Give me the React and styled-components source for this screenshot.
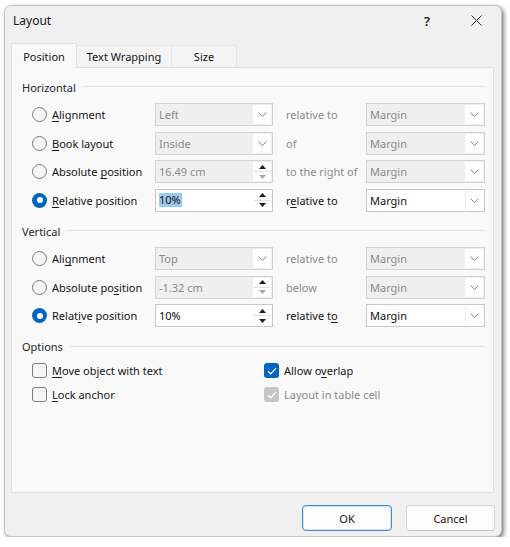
import React from 'react';
import styled, { createGlobalStyle, css } from 'styled-components';

const GlobalStyle = createGlobalStyle`
  html, body { margin: 0; padding: 0; background: #ffffff; }
  body {
    font-family: "Noto Sans", "Segoe UI", sans-serif;
    font-size: 11px;
    color: #141414;
  }
  * { box-sizing: border-box; }
`;

const Stage = styled.div`
  padding: 5px 0 0 4px;
`;

const Window = styled.div`
  width: 498px;
  height: 532px;
  background: #f0f0f0;
  border: 1px solid #c4c4c4;
  border-radius: 7px;
  box-shadow: 2px 2px 4px rgba(0, 0, 0, 0.5);
  display: flex;
  flex-direction: column;
  padding: 0 7px 5px 6px;
`;

const TitleBar = styled.div`
  height: 29px;
  display: flex;
  align-items: center;
  margin-right: -7px;
  padding-left: 2px;
`;

const Title = styled.div`
  flex: 1;
  font-size: 12px;
  color: #141414;
`;

const CaptionButton = styled.div`
  width: ${p => p.$w}px;
  height: 29px;
  display: flex;
  align-items: center;
  justify-content: center;
  color: #222;
  font-size: 13px;
  font-weight: 600;
`;

const TabStrip = styled.div`
  margin-top: 8px;
  height: 24px;
  display: flex;
  align-items: flex-end;
  position: relative;
  z-index: 1;
`;

const Tab = styled.div`
  width: ${p => p.$w}px;
  display: flex;
  align-items: center;
  justify-content: center;
  color: #141414;
  ${p => p.$active
    ? css`
        height: 25px;
        margin-bottom: -1px;
        background: #f9f9f9;
        border: 1px solid #e1e1e1;
        border-bottom: none;
      `
    : css`
        height: 22px;
        background: #f4f4f4;
        border: 1px solid #e6e6e6;
        border-left: none;
        border-bottom: none;
      `}
`;

const Panel = styled.div`
  height: 426px;
  background: #f9f9f9;
  border: 1px solid #e1e1e1;
  padding: 11px 8px 0 10px;
`;

const Group = styled.section`
  & + & { margin-top: ${p => p.$gap ?? 8}px; }
`;

const GroupHeader = styled.div`
  height: 16px;
  display: flex;
  align-items: center;
  color: #262626;
  &::after {
    content: '';
    flex: 1;
    height: 1px;
    margin: -1px 0 0 7px;
    background: #e4e4e4;
  }
`;

const Rows = styled.div`
  margin-top: ${p => p.$top}px;
`;

const FieldRow = styled.div`
  height: 28.5px;
  padding-left: 11px;
  display: grid;
  grid-template-columns: 122px 118px 93px 119px;
  align-items: center;
`;

const Choice = styled.label`
  display: flex;
  align-items: center;
  gap: 5px;
  white-space: nowrap;
`;

const Radio = styled.span`
  width: 15px;
  height: 15px;
  margin-left: -1px;
  border-radius: 50%;
  flex: none;
  display: flex;
  align-items: center;
  justify-content: center;
  ${p => p.$checked
    ? css`
        background: #0067c0;
        &::after {
          content: '';
          width: 6px;
          height: 6px;
          border-radius: 50%;
          background: #ffffff;
        }
      `
    : css`
        background: #f4f4f4;
        border: 1px solid #7c7c7c;
      `}
`;

const Key = styled.u`
  text-decoration-thickness: 1px;
  text-underline-offset: 2px;
`;

const Field = styled.div`
  height: 23px;
  display: flex;
  border: 1px solid ${p => (p.$disabled ? '#d2d2d2' : '#c8c8c8')};
  background: ${p => (p.$disabled ? '#efefef' : '#ffffff')};
  color: ${p => (p.$disabled ? '#8a8a8a' : '#111111')};
`;

const FieldValue = styled.span`
  flex: 1;
  display: flex;
  align-items: center;
  padding-left: 3px;
  white-space: nowrap;
`;

const Selection = styled.span`
  background: #9dc8ef;
  color: #111;
  line-height: 14px;
  padding-right: 1px;
`;

const DropButton = styled.span`
  width: 18px;
  margin: 1px;
  background: #ffffff;
  display: flex;
  align-items: center;
  justify-content: center;
  border-left: 1px solid ${p => (p.$disabled ? 'transparent' : '#ececec')};
`;

const SpinButtons = styled.span`
  width: 18px;
  margin: 1px;
  background: #ffffff;
  display: flex;
  flex-direction: column;
`;

const SpinHalf = styled.span`
  flex: 1;
  display: flex;
  align-items: center;
  justify-content: center;
  & + & { border-top: 1px solid #e2e2e2; }
`;

const Relation = styled.span`
  padding-left: 13px;
  white-space: nowrap;
  color: ${p => (p.$disabled ? '#8a8a8a' : '#141414')};
`;

const OptionRows = styled.div`
  margin-top: 4px;
  padding-left: 10px;
  display: grid;
  grid-template-columns: 232px 1fr;
  grid-auto-rows: 24px;
  align-items: center;
`;

const Check = styled.span`
  width: 15px;
  height: 15px;
  border-radius: 3px;
  flex: none;
  display: flex;
  align-items: center;
  justify-content: center;
  ${p => p.$checked
    ? css`background: ${p.$disabled ? '#c6c6c6' : '#0067c0'};`
    : css`
        background: #f6f6f6;
        border: 1px solid #7c7c7c;
      `}
`;

const CheckLabel = styled.label`
  display: flex;
  align-items: center;
  gap: 5px;
  white-space: nowrap;
  color: ${p => (p.$disabled ? '#8a8a8a' : '#141414')};
`;

const ButtonBar = styled.div`
  margin-top: 12px;
  margin-right: -1px;
  display: flex;
  justify-content: flex-end;
  gap: 14px;
`;

const Button = styled.button`
  width: ${p => p.$w}px;
  height: 26px;
  font: inherit;
  color: #141414;
  background: #fdfdfd;
  border-radius: 4px;
  ${p => p.$default
    ? css`
        border: 1px solid #3f8bd6;
        box-shadow: inset 0 0 0 1px #d3e6f8;
      `
    : css`
        border: 1px solid #d6d6d6;
        border-bottom-color: #c4c4c4;
      `}
`;

const Chevron = () => (
  <svg width="9" height="5" viewBox="0 0 9 5">
    <polyline points="0.5,0.5 4.5,4.5 8.5,0.5" fill="none" stroke="#8a8a8a" strokeWidth="1" />
  </svg>
);

const Arrow = ({ down, color }) => (
  <svg width="7" height="4" viewBox="0 0 7 4">
    <polygon points={down ? '0,0 7,0 3.5,4' : '0,4 7,4 3.5,0'} fill={color} />
  </svg>
);

const Tick = () => (
  <svg width="10" height="8" viewBox="0 0 10 8">
    <polyline points="1,4.2 3.7,6.8 9,1.2" fill="none" stroke="#ffffff" strokeWidth="1.2" />
  </svg>
);

const CloseGlyph = () => (
  <svg width="11" height="11" viewBox="0 0 11 11">
    <path d="M0.5 0.5 L10.5 10.5 M10.5 0.5 L0.5 10.5" stroke="#2b2b2b" strokeWidth="1" />
  </svg>
);

// Label text with its access key underlined
const Mnemonic = ({ text, at }) => {
  if (at == null) return text;
  return (
    <>
      {text.slice(0, at)}
      <Key>{text[at]}</Key>
      {text.slice(at + 1)}
    </>
  );
};

const ValueBox = ({ kind, value, disabled, highlighted, downDisabled }) => (
  <Field $disabled={disabled}>
    <FieldValue>{highlighted ? <Selection>{value}</Selection> : value}</FieldValue>
    {kind === 'select' ? (
      <DropButton $disabled={disabled}>
        <Chevron />
      </DropButton>
    ) : (
      <SpinButtons>
        <SpinHalf><Arrow color="#1b1b1b" /></SpinHalf>
        <SpinHalf><Arrow down color={downDisabled ? '#a8a8a8' : '#1b1b1b'} /></SpinHalf>
      </SpinButtons>
    )}
  </Field>
);

const PositionRow = ({ row }) => {
  const disabled = !row.checked;
  return (
    <FieldRow>
      <Choice>
        <Radio $checked={row.checked} />
        <span><Mnemonic text={row.label} at={row.key} /></span>
      </Choice>
      <ValueBox
        kind={row.kind}
        value={row.value}
        disabled={disabled}
        highlighted={row.highlighted}
        downDisabled={disabled}
      />
      <Relation $disabled={disabled}>
        <Mnemonic text={row.relation} at={row.relationKey} />
      </Relation>
      <ValueBox kind="select" value="Margin" disabled={disabled} />
    </FieldRow>
  );
};

const horizontal = [
  { label: 'Alignment', key: 0, kind: 'select', value: 'Left', relation: 'relative to' },
  { label: 'Book layout', key: 0, kind: 'select', value: 'Inside', relation: 'of' },
  { label: 'Absolute position', key: 9, kind: 'spin', value: '16.49 cm', relation: 'to the right of' },
  {
    label: 'Relative position', key: 0, kind: 'spin', value: '10%', relation: 'relative to',
    relationKey: 1, checked: true, highlighted: true,
  },
];

const vertical = [
  { label: 'Alignment', key: 3, kind: 'select', value: 'Top', relation: 'relative to' },
  { label: 'Absolute position', key: 11, kind: 'spin', value: '-1.32 cm', relation: 'below' },
  {
    label: 'Relative position', key: 5, kind: 'spin', value: '10%', relation: 'relative to',
    relationKey: 10, checked: true,
  },
];

const options = [
  { label: 'Move object with text', key: 0 },
  { label: 'Allow overlap', key: 7, checked: true },
  { label: 'Lock anchor', key: 0 },
  { label: 'Layout in table cell', checked: true, disabled: true },
];

export default function App() {
  return (
    <>
      <GlobalStyle />
      <Stage>
        <Window>
          <TitleBar>
            <Title>Layout</Title>
            <CaptionButton $w={48}>?</CaptionButton>
            <CaptionButton $w={50}><CloseGlyph /></CaptionButton>
          </TitleBar>

          <TabStrip>
            <Tab $w={66} $active>Position</Tab>
            <Tab $w={95}>Text Wrapping</Tab>
            <Tab $w={65}>Size</Tab>
          </TabStrip>

          <Panel>
            <Group>
              <GroupHeader>Horizontal</GroupHeader>
              <Rows $top={5.5}>
                {horizontal.map(r => <PositionRow key={r.label} row={r} />)}
              </Rows>
            </Group>

            <Group $gap={8}>
              <GroupHeader>Vertical</GroupHeader>
              <Rows $top={5.5}>
                {vertical.map(r => <PositionRow key={r.label} row={r} />)}
              </Rows>
            </Group>

            <Group $gap={8.5}>
              <GroupHeader>Options</GroupHeader>
              <OptionRows>
                {options.map(o => (
                  <CheckLabel key={o.label} $disabled={o.disabled}>
                    <Check $checked={o.checked} $disabled={o.disabled}>
                      {o.checked && <Tick />}
                    </Check>
                    <span><Mnemonic text={o.label} at={o.key} /></span>
                  </CheckLabel>
                ))}
              </OptionRows>
            </Group>
          </Panel>

          <ButtonBar>
            <Button $w={90} $default>OK</Button>
            <Button $w={89}>Cancel</Button>
          </ButtonBar>
        </Window>
      </Stage>
    </>
  );
}
